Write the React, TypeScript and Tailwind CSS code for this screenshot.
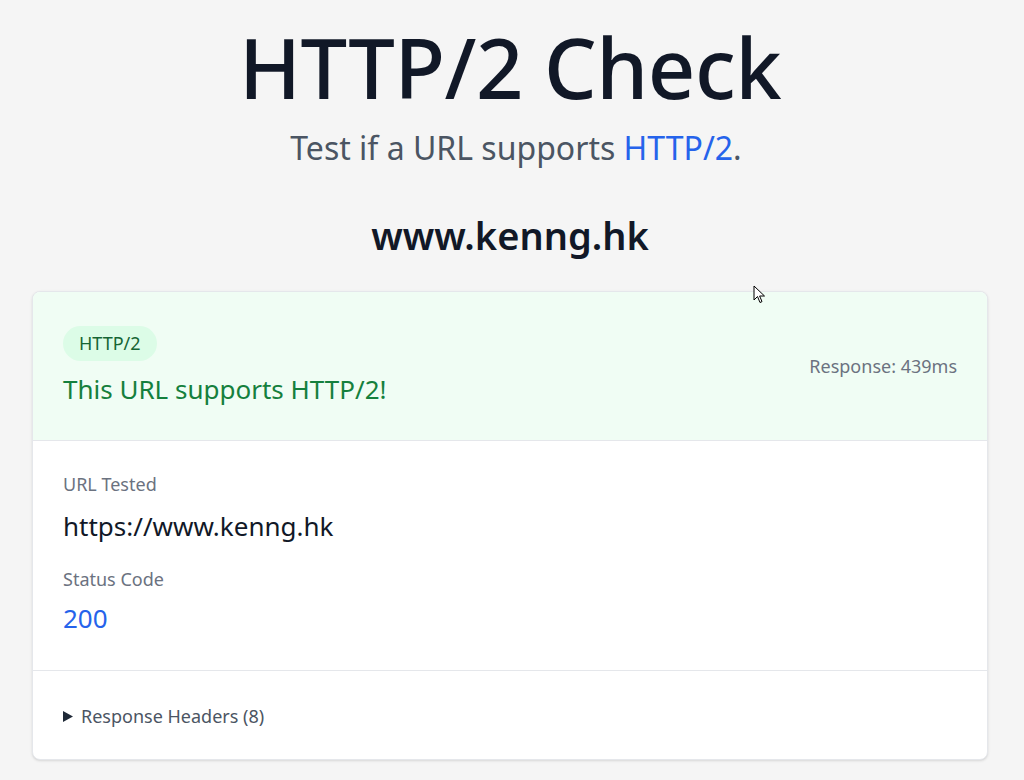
import React from "react";

export default function App() {
  return (
    <div className="relative min-h-[780px] bg-[#f5f5f5] text-gray-900" style={{ fontFamily: '"Noto Sans", "Open Sans", sans-serif' }}>
      <div className="ml-[32px] w-[956px] pt-[19px]">
        <h1 className="text-center text-[83px] font-medium leading-[96px] text-[#111827] tracking-[-0.5px]">HTTP/2 Check</h1>
        <p className="mt-[13px] pl-[12px] text-center text-[32px] leading-[40px] text-[#4b5563]">
          Test if a URL supports <span className="text-[#2563eb]">HTTP/2</span>.
        </p>
        <h2 className="mt-[43px] text-center text-[38px] font-semibold leading-[48px] text-[#111827]">www.kenng.hk</h2>
        <div className="mt-[32px] overflow-hidden rounded-lg border border-gray-200 bg-white shadow-sm">
          <div className="flex items-center justify-between border-b border-gray-200 bg-[#f0fdf4] pl-[30px] pr-[30px] pt-[34px] pb-[34px]">
            <div>
              <span className="inline-block rounded-full bg-[#dcfce7] px-[16px] py-[4px] text-[18px] leading-[27px] text-[#166534]">HTTP/2</span>
              <div className="mt-[11px] text-[26px] leading-[34px] text-[#15803d]">This URL supports HTTP/2!</div>
            </div>
            <div className="text-[18px] leading-[26px] text-[#6b7280]">Response: 439ms</div>
          </div>
          <div className="border-b border-gray-200 px-[30px] pt-[30px] pb-[34px]">
            <div className="text-[18px] leading-[26px] text-[#6b7280]">URL Tested</div>
            <div className="mt-[11px] text-[26px] leading-[36px] text-[#111827]">https://www.kenng.hk</div>
            <div className="mt-[22px] text-[18px] leading-[26px] text-[#6b7280]">Status Code</div>
            <div className="mt-[8px] text-[26px] leading-[36px] text-[#2563eb]">200</div>
          </div>
          <div className="flex items-center px-[30px] pt-[32px] pb-[30px] text-[18px] leading-[26px] text-[#4b5563]">
            <svg className="mr-[8px] shrink-0" width="10" height="11" viewBox="0 0 10 11">
              <path d="M0 0 L10 5.5 L0 11 Z" fill="#1f2937" />
            </svg>
            Response Headers (8)
          </div>
        </div>
      </div>
      <svg className="absolute left-[753px] top-[285px]" width="13" height="20" viewBox="0 0 13 20">
        <path d="M1 1 L1 15 L4.5 11.5 L7 17.5 L9 16.6 L6.6 11 L11.5 11 Z" fill="white" stroke="black" strokeWidth="1" strokeLinejoin="round" />
      </svg>
    </div>
  );
}
